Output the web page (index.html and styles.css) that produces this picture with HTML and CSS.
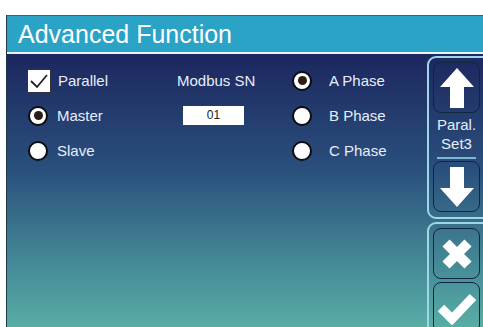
FILE: index.html
```html
<!DOCTYPE html>
<html lang="en">
<head>
    <meta charset="UTF-8">
    <title>Advanced Function</title>
    <link rel="stylesheet" href="styles.css">
</head>
<body>
    <div class="screen">
        <div class="title-bar">Advanced Function</div>

        <div class="main">
            <div class="options">
                <!-- Column 1 -->
                <div class="cell col1">
                    <span class="checkbox">
                        <svg width="22" height="22" viewBox="0 0 22 22"><path d="M3 11 L9 17 L19 5" fill="none" stroke="#222" stroke-width="1.8"/></svg>
                    </span>
                    <span>Parallel</span>
                </div>
                <div class="cell col2"><span class="sn-label">Modbus SN</span></div>
                <div class="cell col3">
                    <span class="radio checked"></span>
                    <span class="phase">A Phase</span>
                </div>

                <div class="cell col1">
                    <span class="radio checked"></span>
                    <span>Master</span>
                </div>
                <div class="cell col2"><span class="sn-box">01</span></div>
                <div class="cell col3">
                    <span class="radio"></span>
                    <span class="phase">B Phase</span>
                </div>

                <div class="cell col1">
                    <span class="radio"></span>
                    <span>Slave</span>
                </div>
                <div class="cell col2"></div>
                <div class="cell col3">
                    <span class="radio"></span>
                    <span class="phase">C Phase</span>
                </div>
            </div>

            <!-- Side buttons -->
            <div class="side">
                <div class="group">
                    <div class="btn">
                        <svg width="36" height="42" viewBox="0 0 36 42"><path d="M18 1 L35 20 L25 20 L25 41 L11 41 L11 20 L1 20 Z" fill="#fff"/></svg>
                    </div>
                    <div class="btn-label">Paral.<br>Set3</div>
                    <div class="sep"></div>
                    <div class="btn">
                        <svg width="36" height="42" viewBox="0 0 36 42"><path d="M18 41 L35 22 L25 22 L25 1 L11 1 L11 22 L1 22 Z" fill="#fff"/></svg>
                    </div>
                </div>
                <div class="group">
                    <div class="btn">
                        <svg width="34" height="34" viewBox="0 0 34 34"><path d="M6 6 L28 28 M28 6 L6 28" stroke="#fff" stroke-width="10"/></svg>
                    </div>
                    <div class="btn">
                        <svg width="40" height="34" viewBox="0 0 40 34"><path d="M4 17 L15 28 L36 6" fill="none" stroke="#fff" stroke-width="9" stroke-linejoin="miter"/></svg>
                    </div>
                </div>
            </div>
        </div>
    </div>
</body>
</html>
```

FILE: styles.css
```css
html, body {
    margin: 0;
    padding: 0;
    background: #fff;
    overflow: hidden;
}

body {
    font-family: "Liberation Sans", Arial, sans-serif;
    width: 483px;
    height: 327px;
}

.screen {
    margin: 15px 0 0 6px;
    height: 312px;
    border-left: 1px solid #1a3a44;
    display: flex;
    flex-direction: column;
}

.title-bar {
    height: 37px;
    line-height: 36px;
    padding-left: 11px;
    background-color: #2aa3c6;
    border-top: 1px solid #1d6f86;
    border-bottom: 2px solid #e8f4f6;
    color: #fff;
    font-size: 25px;
}

.main {
    flex: 1;
    display: flex;
    background: linear-gradient(to bottom, #1c275f 0%, #2a4f7c 40%, #468c98 75%, #5cb5a9 100%);
}

.options {
    flex: 1;
    display: grid;
    grid-template-columns: 150px 115px 1fr;
    grid-auto-rows: 35px;
    padding: 9px 0 0 20px;
    color: #e6eef8;
    font-size: 15px;
}

.cell {
    display: flex;
    align-items: center;
}

.col1 span:last-child {
    margin-left: 7px;
}

.col1 .radio {
    margin-left: 1px;
}

.col1 .radio + span {
    margin-left: 9px;
}

.checkbox {
    width: 22px;
    height: 22px;
    background: #fff;
    border: 1px solid #333;
    display: flex;
}

.radio {
    width: 16px;
    height: 16px;
    border-radius: 50%;
    background: #fff;
    border: 2px solid #0d0d10;
    display: flex;
    align-items: center;
    justify-content: center;
}

.radio.checked::after {
    content: "";
    width: 9px;
    height: 9px;
    border-radius: 50%;
    background: #2b1d18;
}

.phase {
    margin-left: 17px;
}

.sn-label {
    margin-top: -1px;
}

.sn-box {
    margin-left: 6px;
    width: 61px;
    height: 19px;
    line-height: 19px;
    background: #fff;
    color: #222;
    font-size: 12px;
    text-align: center;
}

.side {
    width: 64px;
    margin-right: -8px;
    padding-top: 2px;
    display: flex;
    flex-direction: column;
    gap: 3px;
}

.group {
    border: 2px solid #9fd6e6;
    border-radius: 9px;
    padding: 4px 9px 5px 4px;
    display: flex;
    flex-direction: column;
}

.group .btn + .btn {
    margin-top: 3px;
}

.btn {
    height: 49px;
    border: 1px solid #10263c;
    border-radius: 8px;
    display: flex;
    align-items: center;
    justify-content: center;
}

.btn-label {
    text-align: center;
    color: #e6eef8;
    font-size: 15px;
    line-height: 19px;
    padding: 2px 0 4px;
}

.sep {
    height: 2px;
    margin: 0 4px 2px 4px;
    background: #7fb9d0;
}
```
